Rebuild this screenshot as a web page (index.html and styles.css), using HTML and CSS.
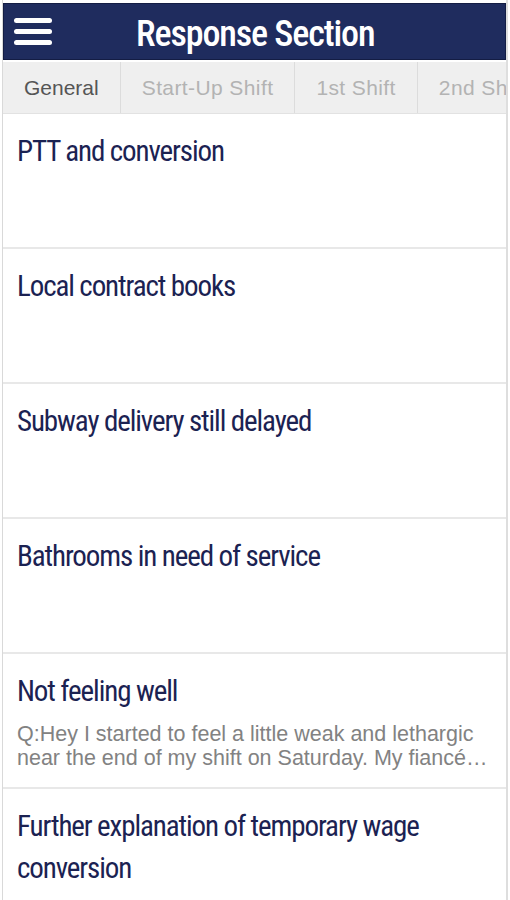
FILE: index.html
```html
<!DOCTYPE html>
<html lang="en">

<head>
    <meta charset="UTF-8">
    <meta name="viewport" content="width=device-width, initial-scale=1.0">
    <title>Response Section</title>
    <link rel="stylesheet" href="styles.css">
</head>

<body>
    <div class="app">
        <header class="topbar">
            <div class="menu-btn">
                <span></span>
                <span></span>
                <span></span>
            </div>
            <h1>Response Section</h1>
        </header>

        <nav class="tabs">
            <div class="tab active">General</div>
            <div class="tab">Start-Up Shift</div>
            <div class="tab">1st Shift</div>
            <div class="tab">2nd Shift</div>
        </nav>

        <ul class="list">
            <li class="item">
                <h2>PTT and conversion</h2>
            </li>
            <li class="item">
                <h2>Local contract books</h2>
            </li>
            <li class="item">
                <h2>Subway delivery still delayed</h2>
            </li>
            <li class="item">
                <h2>Bathrooms in need of service</h2>
            </li>
            <li class="item">
                <h2>Not feeling well</h2>
                <p>Q:Hey I started to feel a little weak and lethargic near the end of my shift on Saturday. My fiancé and I went to the doctor on Sunday.</p>
            </li>
            <li class="item">
                <h2>Further explanation of temporary wage conversion</h2>
            </li>
        </ul>
    </div>
</body>

</html>
```

FILE: styles.css
```css
body {
    margin: 0;
    background: #ffffff;
}

.app {
    width: 506px;
    height: 900px;
    margin-left: 2px;
    padding-top: 3px;
    overflow: hidden;
    border-left: 1px solid #d9d9d9;
    border-right: 2px solid #dedede;
    box-sizing: border-box;
}

.topbar {
    height: 57px;
    background: #1f2c5e;
    border: 1px solid #141d44;
    box-sizing: border-box;
    display: flex;
    align-items: center;
}

.menu-btn {
    width: 38px;
    margin-left: 10px;
    display: flex;
    flex-direction: column;
    gap: 6px;
}

.menu-btn span {
    display: block;
    height: 5px;
    background: #ffffff;
    border-radius: 3px;
}

.topbar h1 {
    margin: 4px 0 0 84px;
    color: #ffffff;
    font-family: "Roboto Condensed", Roboto, sans-serif;
    font-stretch: condensed;
    font-weight: 500;
    font-size: 36px;
    letter-spacing: -1.1px;
}

.tabs {
    display: flex;
    height: 51px;
    margin-top: 2px;
    background: #efefef;
    border-bottom: 1px solid #e2e2e2;
    white-space: nowrap;
    overflow: hidden;
}

.tab {
    flex: none;
    display: flex;
    align-items: center;
    padding: 0 21px;
    font-family: "Liberation Sans", Arial, sans-serif;
    font-size: 21px;
    letter-spacing: 0.4px;
    color: #b3b3b3;
    border-right: 1px solid #dcdcdc;
}

.tab.active {
    color: #555555;
    letter-spacing: 0;
}

.list {
    list-style: none;
    margin: 0;
    padding: 0;
}

.item {
    height: 135px;
    padding: 16px 14px 0 14px;
    border-bottom: 2px solid #e8e8e8;
    box-sizing: border-box;
    overflow: hidden;
}

.item h2 {
    margin: 0;
    color: #1b2252;
    font-family: "Roboto Condensed", Roboto, sans-serif;
    font-stretch: condensed;
    font-weight: normal;
    font-size: 29px;
    letter-spacing: -1.1px;
    line-height: 42px;
}

.item p {
    margin: 10px 0 0 0;
    color: #828282;
    font-family: "Liberation Sans", Arial, sans-serif;
    font-size: 21.5px;
    line-height: 24px;
    display: -webkit-box;
    -webkit-line-clamp: 2;
    -webkit-box-orient: vertical;
    overflow: hidden;
}
```
